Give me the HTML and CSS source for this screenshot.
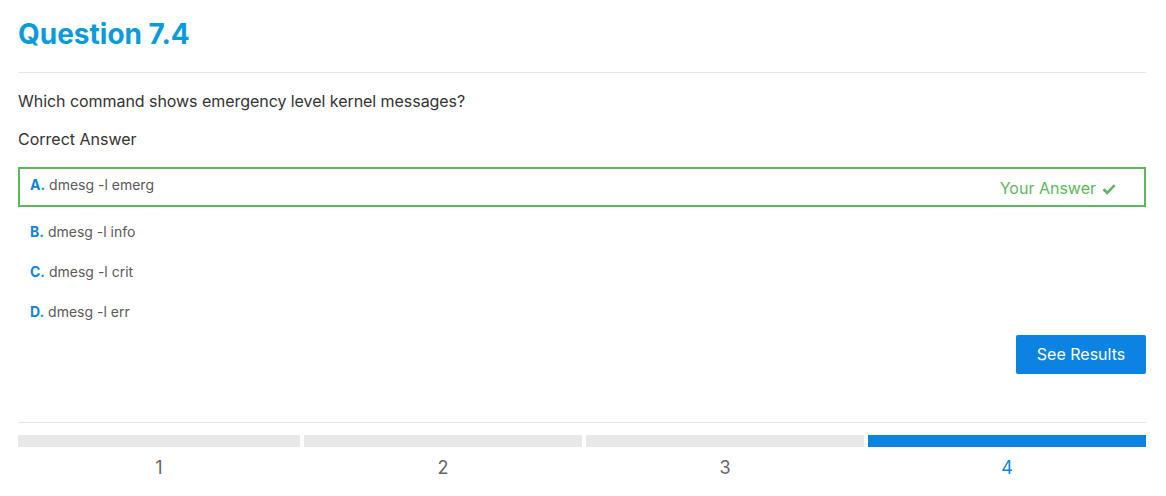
FILE: index.html
```html
<!DOCTYPE html>
<html>
<head>
<meta charset="utf-8">
<link rel="stylesheet" href="styles.css">
</head>
<body>
<div class="page">
  <h1 class="title">Question 7.4</h1>
  <hr class="rule">
  <p class="question">Which command shows emergency level kernel messages?</p>
  <p class="label">Correct Answer</p>
  <div class="options">
    <div class="option selected">
      <span class="opt-text"><b class="letter">A.</b> dmesg -l emerg</span>
      <span class="yours">Your Answer
        <svg class="check" viewBox="0 0 14 12" width="14" height="12"><path d="M1.5 6.2 L5.2 9.8 L12.6 2.2" fill="none" stroke="#5cb85c" stroke-width="2.6"/></svg>
      </span>
    </div>
    <div class="option"><span class="opt-text"><b class="letter">B.</b> dmesg -l info</span></div>
    <div class="option"><span class="opt-text"><b class="letter">C.</b> dmesg -l crit</span></div>
    <div class="option"><span class="opt-text"><b class="letter">D.</b> dmesg -l err</span></div>
  </div>
  <div class="actions">
    <button class="btn">See Results</button>
  </div>
  <hr class="rule bottom">
  <div class="steps">
    <div class="step"><div class="bar"></div><div class="num">1</div></div>
    <div class="step"><div class="bar"></div><div class="num">2</div></div>
    <div class="step"><div class="bar"></div><div class="num">3</div></div>
    <div class="step active"><div class="bar"></div><div class="num">4</div></div>
  </div>
</div>
</body>
</html>
```
FILE: styles.css
```css
* { box-sizing: border-box; }
html, body { margin: 0; padding: 0; background: #fff; }
body { font-family: Inter, "Noto Sans", sans-serif; color: #333; }
.page { padding: 0 20px 0 18px; width: 1166px; }
.title {
  margin: 0;
  padding-top: 17px;
  font-size: 28px;
  line-height: 34px;
  font-weight: 700;
  color: #0b9bdc;
}
.rule { border: 0; border-top: 1px solid #e6e6e6; margin: 21px 0 0; height: 0; }
.question { margin: 17px 0 0; font-size: 16px; line-height: 22px; color: #333; letter-spacing: -0.05px; }
.label { margin: 16px 0 0; font-size: 16px; line-height: 22px; color: #333; }
.options { margin-top: 17px; }
.option {
  height: 40px;
  padding: 7px 12px 0 12px;
  font-size: 14px;
  line-height: 20px;
  color: #5a5a5a;
  display: flex;
  justify-content: space-between;
}
.option.selected { border: 2px solid #5cb85c; padding: 6px 28px 0 10px; margin-bottom: 8px; }
.letter { color: #0a84e0; font-weight: 700; }
.yours { color: #5cb85c; font-size: 16px; line-height: 22px; padding-top: 0; display: flex; align-items: center; gap: 6px; height: 26px; }
.check { margin-top: 1px; }
.actions { display: flex; justify-content: flex-end; margin-top: 0; }
.btn {
  width: 130px; height: 39px;
  background: #0a84e0; color: #fff; border: 0; border-radius: 2px;
  font-family: inherit; font-size: 16px; padding: 0 0 2px;
}
.rule.bottom { margin-top: 48px; }
.steps { display: grid; grid-template-columns: 282px 278px 278px 278px; gap: 4px; margin-top: 12px; }
.bar { height: 12px; background: #e8e8e8; }
.num { text-align: center; font-size: 18px; line-height: 22px; color: #666; margin-top: 10px; }
.step.active .bar { background: #0a84e0; }
.step.active .num { color: #0a84e0; }
```
